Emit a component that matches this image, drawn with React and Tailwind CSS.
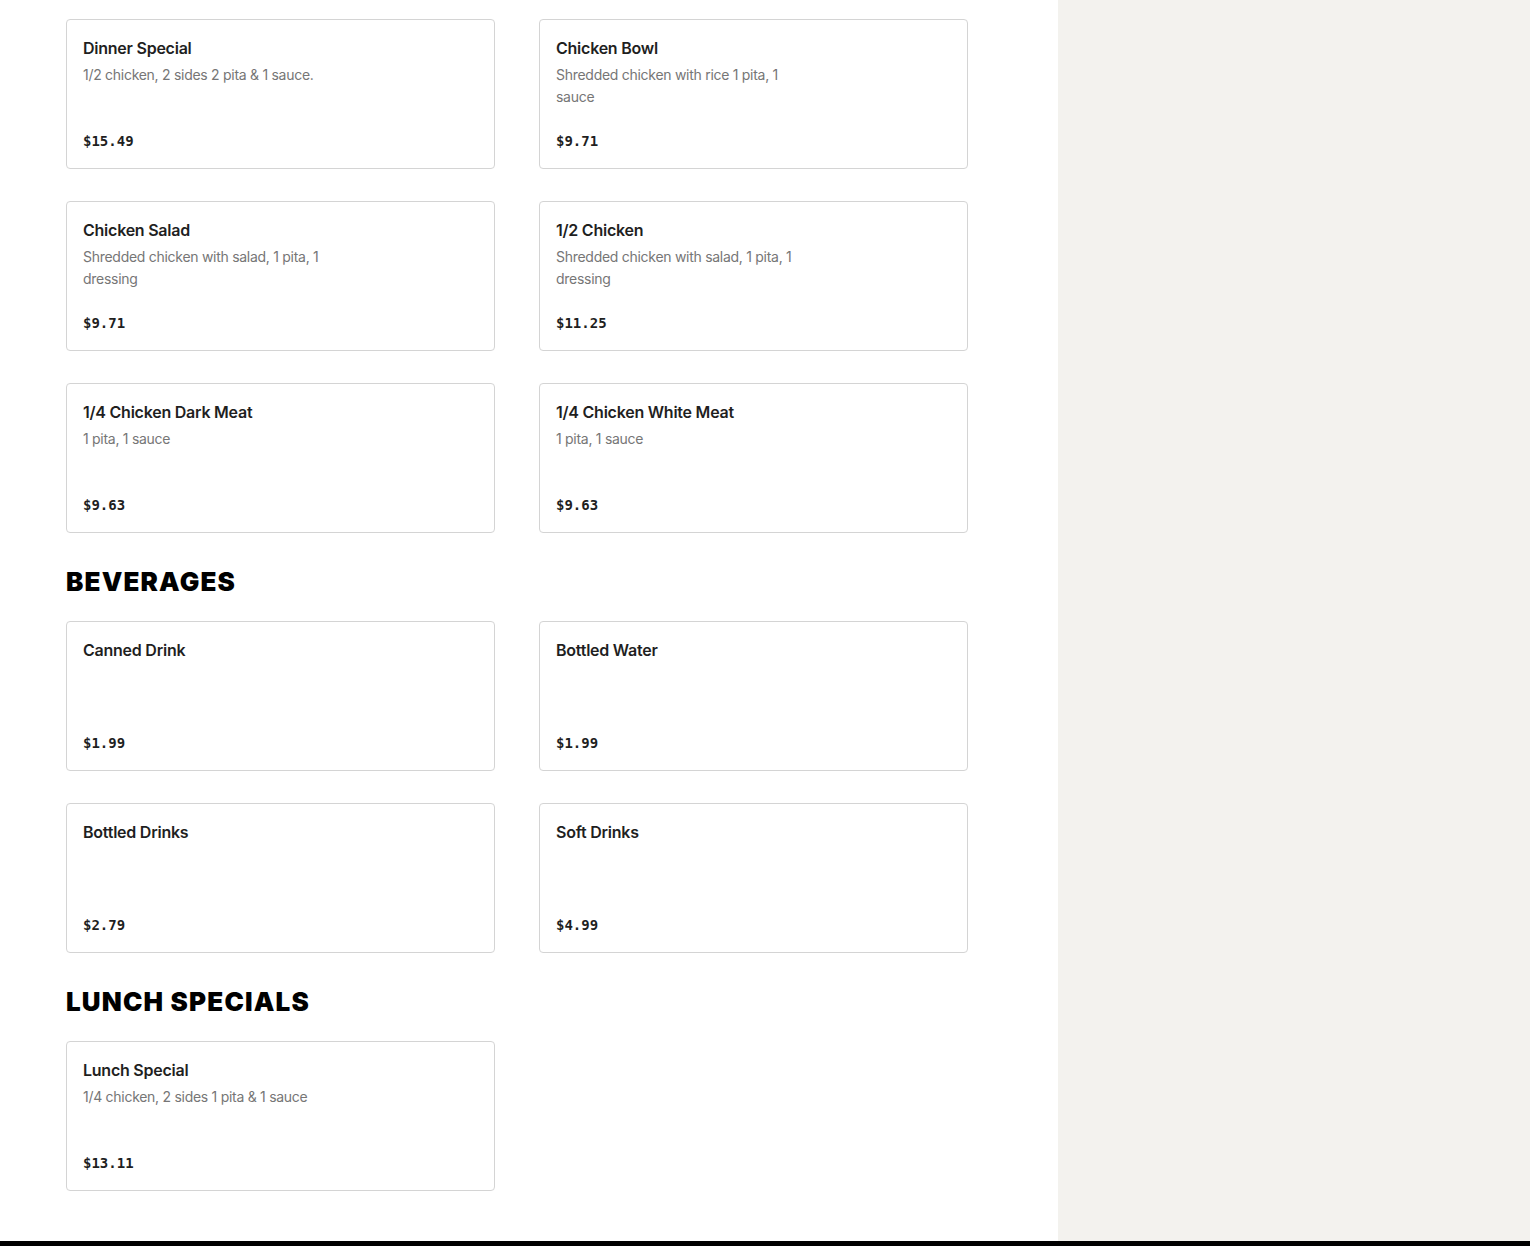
import React from "react";

const chicken = [
  { name: "Dinner Special", desc: "1/2 chicken, 2 sides 2 pita & 1 sauce.", price: "$15.49" },
  { name: "Chicken Bowl", desc: "Shredded chicken with rice 1 pita, 1 sauce", price: "$9.71" },
  { name: "Chicken Salad", desc: "Shredded chicken with salad, 1 pita, 1 dressing", price: "$9.71" },
  { name: "1/2 Chicken", desc: "Shredded chicken with salad, 1 pita, 1 dressing", price: "$11.25" },
  { name: "1/4 Chicken Dark Meat", desc: "1 pita, 1 sauce", price: "$9.63" },
  { name: "1/4 Chicken White Meat", desc: "1 pita, 1 sauce", price: "$9.63" },
];

const beverages = [
  { name: "Canned Drink", price: "$1.99" },
  { name: "Bottled Water", price: "$1.99" },
  { name: "Bottled Drinks", price: "$2.79" },
  { name: "Soft Drinks", price: "$4.99" },
];

const lunch = [
  { name: "Lunch Special", desc: "1/4 chicken, 2 sides 1 pita & 1 sauce", price: "$13.11" },
];

const ItemCard = ({ item }) => (
  <div className="h-[150px] border border-[#d4d4d4] rounded-[4px] bg-white p-4 flex flex-col">
    <div className="text-base leading-6 font-semibold tracking-[-0.015em] text-[#1f1f1f]">{item.name}</div>
    {item.desc && (
      <div className="text-sm leading-[22px] tracking-[-0.02em] text-[#767676] max-w-[245px] mt-[4px]">
        {item.desc}
      </div>
    )}
    <div className="mt-auto mb-[1px] text-sm leading-5 font-bold text-[#1f1f1f] font-['DejaVu_Sans_Mono',monospace]">
      {item.price}
    </div>
  </div>
);

const Section = ({ title, items }) => (
  <div>
    {title && (
      <h2 className="mt-8 mb-6 h-8 flex items-center text-[26px] font-black tracking-[0.045em] text-black font-['Inter',sans-serif]">
        {title}
      </h2>
    )}
    <div className="grid grid-cols-[429px_429px] gap-x-[44px] gap-y-8">
      {items.map((item) => (
        <ItemCard key={item.name} item={item} />
      ))}
    </div>
  </div>
);

const App = () => {
  return (
    <div className="w-full min-h-screen bg-white font-['Inter',sans-serif]">
      <div className="flex h-[1241px]">
        {/* Menu column */}
        <div className="w-[1058px] pl-[66px] pt-[19px]">
          <Section items={chicken} />
          <Section title="BEVERAGES" items={beverages} />
          <Section title="LUNCH SPECIALS" items={lunch} />
        </div>
        {/* Side panel */}
        <div className="flex-1 bg-[#f3f2ee]" />
      </div>
      <div className="h-[5px] bg-black" />
    </div>
  );
};

export default App;
